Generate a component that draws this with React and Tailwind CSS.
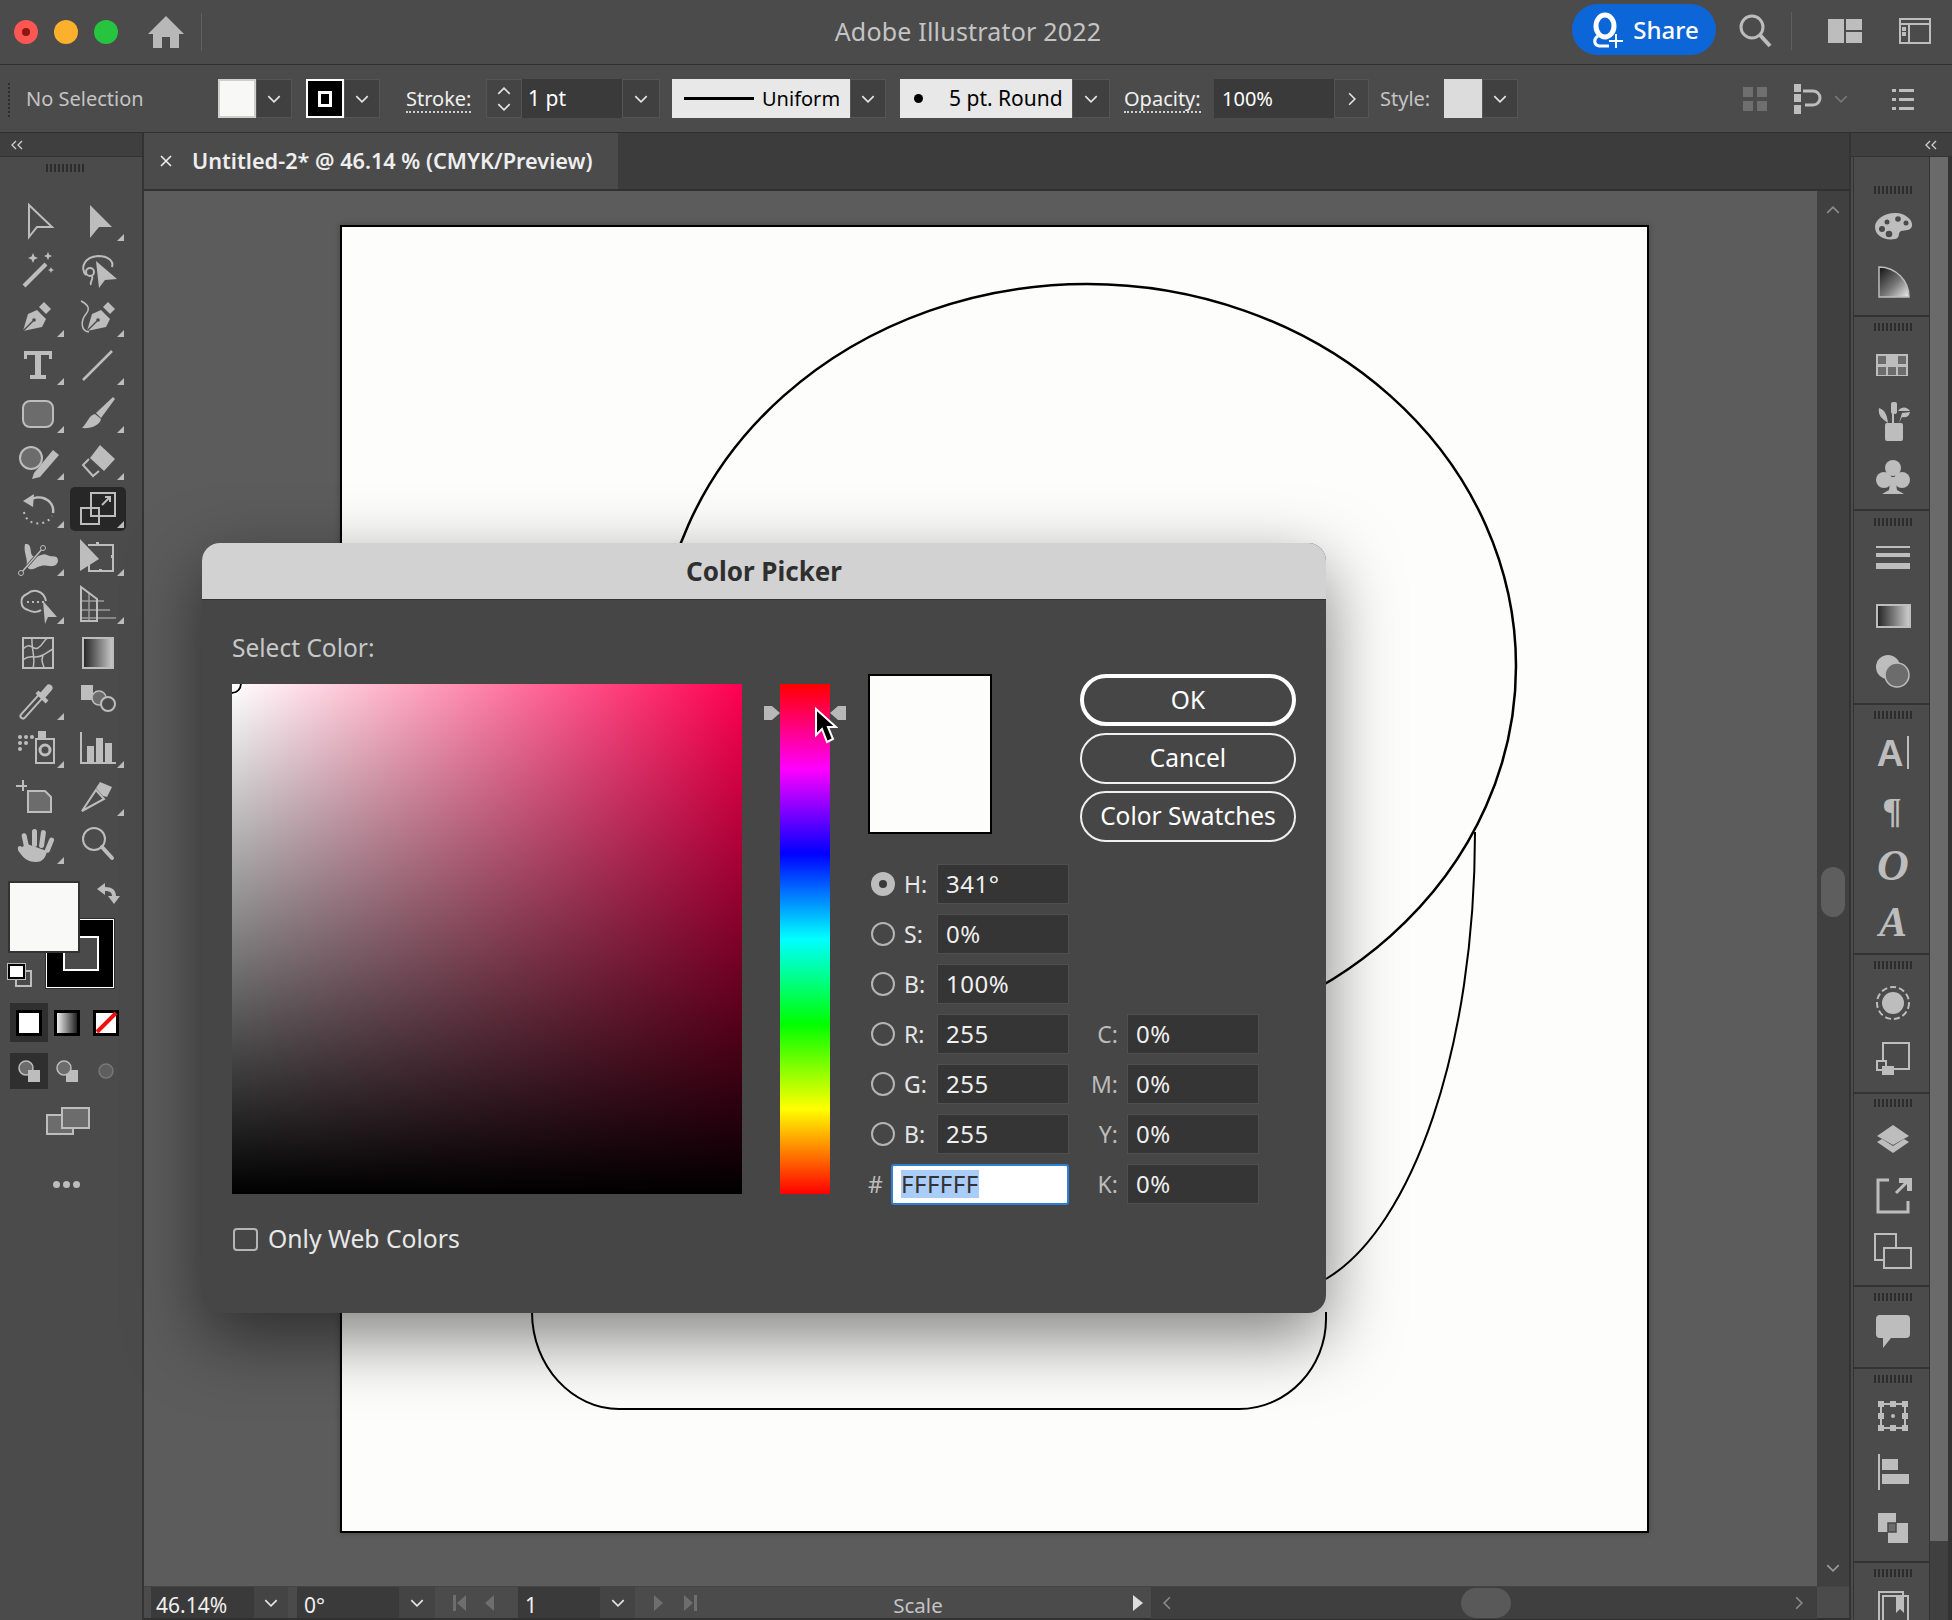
import React from "react";

const C = "#bdbdbd";
const Fly = () => <path d="M26 12V19H19Z" fill={C} />;
const T = ({ children, fly, sel }) => (
  <svg viewBox="-30 -24 60 48" className="w-[60px] h-[48px]" fill={C} stroke="none">
    {sel && <rect x="-28" y="-22" width="56" height="44" rx="5" fill="#272727" />}
    {children}
    {fly && <Fly />}
  </svg>
);
const R = ({ children }) => (
  <svg viewBox="-24 -24 48 48" className="w-[48px] h-[48px]" fill={C} stroke="none">{children}</svg>
);
const line = { stroke: C, fill: "none", strokeWidth: 2 };

const Star = ({ x, y, r }) => <path d={`M${x} ${y - r}L${x + r * 0.3} ${y - r * 0.3}L${x + r} ${y}L${x + r * 0.3} ${y + r * 0.3}L${x} ${y + r}L${x - r * 0.3} ${y + r * 0.3}L${x - r} ${y}L${x - r * 0.3} ${y - r * 0.3}Z`} />;
const Nib = ({ dx = 0 }) => (
  <g transform={`translate(${dx} 0)`}>
    <path d="M-15 13L-10 -4L-1 -8L8 1L4 9Z" />
    <path d="M1 -11L6 -16L13 -9L8 -4Z" />
    <path d="M-15 13L-5 3" stroke="#4a4a4a" strokeWidth="1.5" />
    <circle cx="-4" cy="2" r="1.8" fill="#4a4a4a" />
  </g>
);

const tools = [
  [<T><path d="M-9 -17L14 5L-1 5L-9 15Z" {...line} /></T>, <T fly><path d="M-8 -17L14 5L1 5L-8 16Z" /></T>],
  [<T><path d="M-14 16L8 -6" stroke={C} strokeWidth="4" /><Star x={-5} y={-12} r={5} /><Star x={10} y={-14} r={4} /><Star x={13} y={0} r={3} /></T>,
   <T><path d="M-12 5C-18 -2 -14 -13 0 -14C10 -14 16 -9 14 -3" {...line} /><circle cx="-8" cy="2" r="4" {...line} /><path d="M-6 6C-4 10 -9 12 -7 15" {...line} /><path d="M-2 -9L19 9L7 10L1 18Z" /></T>],
  [<T fly><Nib /></T>, <T fly><Nib dx={4} /><path d="M-17 -17C-11 -14 -7 -10 -12 -4C-17 2 -18 13 -9 14" {...line} strokeWidth="1.5" /></T>],
  [<T fly><path d="M-14 -15H14V-7H11V-11H3V9H8V13H-8V9H-3V-11H-11V-7H-14Z" /></T>, <T fly><path d="M-15 14L14 -15" stroke={C} strokeWidth="2.5" /></T>],
  [<T fly><rect x="-15" y="-13" width="30" height="26" rx="7" fill="#6c6c6c" stroke={C} strokeWidth="2" /></T>,
   <T fly><path d="M15 -17L17 -15L3 4L-2 -1Z" /><path d="M-3 0C-9 1 -10 8 -16 14C-7 15 2 11 3 5Z" /></T>],
  [<T fly><circle cx="-7" cy="-3" r="11" fill="#6c6c6c" stroke={C} strokeWidth="2" /><path d="M-4 12L15 -11L21 -6L2 16L-6 18Z" /></T>,
   <T fly><path d="M2 -16L17 -2L6 10L-8 -3Z" /><path d="M-9 -2L-15 4L-5 15L1 10" {...line} /></T>],
  [<T fly><path d="M-9 -8C0 -16 17 -10 15 4" {...line} strokeWidth="2.5" /><path d="M-15 -8L-4 -15L-5 -2Z" /><path d="M-14 3C-12 17 8 18 14 7" {...line} strokeDasharray="2 4" /></T>,
   <T fly sel><path d="M-7 -16H17V7H-7Z" {...line} /><path d="M-17 -1H1V15H-17Z" {...line} /><path d="M4 -4L12 -12M7 -12H12V-7" {...line} /></T>],
  [<T fly><path d="M-13 -13C-5 -14 -9 -4 -5 -1C-1 2 4 -5 9 -2C14 1 20 -3 20 4C18 13 8 7 3 9C-3 10 -7 16 -12 9C-9 3 -15 -4 -13 -13Z" /><path d="M-17 16L5 -9" stroke="#4a4a4a" strokeWidth="3" /><path d="M-17 16L5 -9" {...line} strokeWidth="1.5" /><circle cx="-17" cy="16" r="2.5" fill="#4a4a4a" stroke={C} /><circle cx="5" cy="-9" r="2.5" fill="#4a4a4a" stroke={C} /></T>,
   <T fly><path d="M-10 -12H15V14H-9V2" {...line} /><path d="M-18 -18L1 2L-18 14Z" /><rect x="-2" y="-15" width="3" height="3" /><rect x="13" y="-2" width="3" height="3" /><rect x="1" y="12" width="3" height="3" /></T>],
  [<T fly><path d="M8 -4C6 -14 -4 -17 -11 -11C-19 -8 -18 3 -10 5C-5 8 1 7 3 5" {...line} /><path d="M-11 -3H6" {...line} strokeDasharray="2 3" /><path d="M5 -4L19 12L10 12L7 19Z" /></T>,
   <T fly><path d="M-17 -18V16H-1L-1 -6Z" {...line} /><path d="M-17 -4H6M-17 5H12M-17 13H18M-9 -12V16" {...line} strokeWidth="1.5" opacity="0.7" /></T>],
  [<T><rect x="-15" y="-15" width="30" height="30" {...line} /><path d="M-15 -4C-7 -12 -6 -2 0 -5C6 -9 6 -14 10 -15M-15 7C-7 0 -3 7 5 2C10 -1 11 -2 15 -4M-6 -15C-7 -5 -2 5 -5 15M5 3C2 8 6 12 6 15" {...line} strokeWidth="1.5" /></T>,
   <T><defs><linearGradient id="tg" x1="0" x2="1" y1="0" y2="0"><stop offset="0" stopColor="#222" /><stop offset="1" stopColor="#ccc" /></linearGradient></defs><rect x="-15" y="-15" width="30" height="30" fill="url(#tg)" stroke={C} strokeWidth="2" /></T>],
  [<T fly><path d="M-15 15L3 -5" stroke={C} strokeWidth="7" strokeLinecap="round" /><path d="M-15 15L3 -5" stroke="#4a4a4a" strokeWidth="3" strokeLinecap="round" /><path d="M-1 -9L9 1" stroke={C} strokeWidth="4" /><path d="M5 -6L11 -13" stroke={C} strokeWidth="7" strokeLinecap="round" /></T>,
   <T><path d="M-17 -16H-5V-1H-17Z" /><circle cx="1" cy="-3" r="7" fill="#6c6c6c" stroke={C} strokeWidth="1.5" /><circle cx="10" cy="3" r="7" fill="#4a4a4a" stroke={C} strokeWidth="2" /></T>],
  [<T fly><circle cx="-18" cy="-12" r="2" /><circle cx="-12" cy="-12" r="2" /><circle cx="-6" cy="-12" r="2" /><circle cx="-18" cy="-6" r="2" /><circle cx="-12" cy="-6" r="2" /><circle cx="-18" cy="0" r="2" /><rect x="0" y="-18" width="8" height="7" /><rect x="-2" y="-10" width="18" height="24" {...line} /><circle cx="7" cy="1" r="5" {...line} strokeWidth="3" /></T>,
   <T fly><path d="M-17 -17V14H18" {...line} /><rect x="-11" y="-3" width="7" height="16" /><rect x="-2" y="-11" width="7" height="24" /><rect x="7" y="-6" width="7" height="19" /></T>],
  [<T><path d="M-22 -11H-11M-15 -17V-6" {...line} /><path d="M-10 -6H7L13 0V15H-10Z" fill="#6c6c6c" stroke={C} strokeWidth="2" /></T>,
   <T fly><path d="M-16 14L-2 -7L6 2Z" {...line} /><path d="M-2 -9L2 -15L14 -10L9 0L5 -1Z" /></T>],
  [<T fly><rect x="-6" y="-16" width="5" height="18" rx="2.5" /><rect x="-15" y="-12" width="5" height="18" rx="2.5" transform="rotate(-12 -12 -3)" /><rect x="2" y="-15" width="5" height="18" rx="2.5" transform="rotate(8 4 -6)" /><rect x="9" y="-8" width="5" height="16" rx="2.5" transform="rotate(22 11 0)" /><path d="M-16 2C-20 -1 -22 4 -18 8C-14 14 -9 17 -2 17C5 17 8 12 9 6L-11 -1Z" /></T>,
   <T><circle cx="-4" cy="-6" r="11" {...line} /><path d="M4 2L14 13" stroke={C} strokeWidth="4" strokeLinecap="round" /></T>],
];

const Chev = ({ d = "down", c = "#e6e6e6", s = 16 }) => (
  <svg viewBox="0 0 14 14" width={s} height={s} fill="none" stroke={c} strokeWidth="1.4">
    <path d={d === "down" ? "M2 4.5L7 9.5L12 4.5" : d === "up" ? "M2 9.5L7 4.5L12 9.5" : d === "right" ? "M4.5 2L9.5 7L4.5 12" : "M9.5 2L4.5 7L9.5 12"} />
  </svg>
);
const Drop = ({ w = "w-[36px]" }) => (
  <div className={`${w} h-[39px] bg-[#404040] flex items-center justify-center border border-[#555555]`}><Chev /></div>
);
const Grip = () => <div className="h-[8px] w-[38px] bg-[repeating-linear-gradient(90deg,#2c2c2c_0_2px,transparent_2px_4px)]" />;
const Collapse = () => (
  <svg width="14" height="10" viewBox="0 0 14 10" fill="none" stroke="#cfcfcf" strokeWidth="1.3"><path d="M6 1L2 5L6 9M12 1L8 5L12 9" /></svg>
);

const Group = ({ h, top = 6, gap = 6, cell = "h-[56px]", items, last }) => (
  <div className={`${h} flex flex-col items-center shrink-0 pl-[3px] ${last ? "" : "border-b-2 border-[#333333]"}`}>
    <div style={{ height: top }} className="shrink-0" />
    <Grip />
    <div style={{ height: gap }} className="shrink-0" />
    {items.map((it, i) => <div key={i} className={`${cell} flex items-center justify-center shrink-0`}><R>{it}</R></div>)}
  </div>
);

const serif = { fontFamily: "'Liberation Serif', serif" };
const sans = { fontFamily: "'Liberation Sans', sans-serif" };

const rightGroups = [
  { h: "h-[160px]", top: 29, gap: 4, items: [
    <g><path d="M-18 1C-18 -8 -6 -14 4 -13C13 -12 20 -6 19 0C18 5 12 4 8 5C4 7 8 12 2 13C-8 15 -18 10 -18 1Z" /><circle cx="-11" cy="3" r="3" fill="#4a4a4a" /><circle cx="-4" cy="8" r="3.3" fill="#4a4a4a" /><circle cx="-6" cy="-4" r="2.5" fill="#4a4a4a" /><circle cx="5" cy="-7" r="2.8" fill="#4a4a4a" /><circle cx="13" cy="-3" r="2.5" fill="#4a4a4a" /></g>,
    <g><defs><linearGradient id="sp" x1="0" y1="0" x2="1" y2="1"><stop offset="0" stopColor="#111" /><stop offset="0.55" stopColor="#777" /><stop offset="1" stopColor="#eee" /></linearGradient></defs><path d="M-14 -15A30 30 0 0 1 16 15H-14Z" fill="url(#sp)" stroke={C} strokeWidth="1.5" /></g>,
  ] },
  { h: "h-[194px]", items: [
    <g><rect x="-17" y="-11" width="32" height="22" /><rect x="-15" y="-9" width="8" height="8" fill="#6c6c6c" /><rect x="5" y="-9" width="8" height="8" fill="#6c6c6c" /><rect x="-15" y="2" width="8" height="8" fill="#6c6c6c" /><rect x="-5" y="2" width="8" height="8" fill="#6c6c6c" /><rect x="5" y="2" width="8" height="8" fill="#6c6c6c" /></g>,
    <g><rect x="-8" y="2" width="18" height="18" rx="2" /><rect x="-2" y="-19" width="6" height="12" rx="2" /><path d="M0 -8V2" stroke={C} strokeWidth="2" /><path d="M-14 -13C-8 -11 -6 -6 -5 2L-9 -1C-13 -4 -15 -8 -14 -13Z" /><path d="M6 2L9 -8L17 -9C16 -4 12 -3 9 -4" /><path d="M5 -10C9 -15 14 -14 17 -10Z" /></g>,
    <g><circle cx="0" cy="-9" r="8" /><circle cx="-9" cy="3" r="8" /><circle cx="9" cy="3" r="8" /><path d="M-2 0H2L4 13L11 17H-11L-4 13Z" /></g>,
  ] },
  { h: "h-[194px]", top: 7, items: [
    <g><rect x="-17" y="-14" width="34" height="2" /><rect x="-17" y="-7" width="34" height="4" /><rect x="-17" y="3" width="34" height="6" /></g>,
    <g><defs><linearGradient id="rg" x1="0" x2="1" y1="0" y2="0"><stop offset="0" stopColor="#222" /><stop offset="1" stopColor="#d0d0d0" /></linearGradient></defs><rect x="-16" y="-11" width="33" height="22" fill="url(#rg)" stroke={C} strokeWidth="2" /></g>,
    <g><circle cx="-5" cy="-5" r="12" /><circle cx="4" cy="3" r="12" fill="#6c6c6c" stroke={C} strokeWidth="1.5" /></g>,
  ] },
  { h: "h-[250px]", items: [
    <g><text x="-3" y="13" textAnchor="middle" fontSize="37" fontWeight="700" fill={C} style={sans}>A</text><rect x="14" y="-17" width="2" height="33" /></g>,
    <text x="-1" y="14" textAnchor="middle" fontSize="36" fontWeight="700" fill={C} style={serif}>¶</text>,
    <text x="0" y="15" textAnchor="middle" fontSize="44" fontWeight="700" fontStyle="italic" fill={C} style={serif}>O</text>,
    <text x="0" y="15" textAnchor="middle" fontSize="42" fontWeight="700" fontStyle="italic" fill={C} style={serif}>A</text>,
  ] },
  { h: "h-[139px]", items: [
    <g><circle cx="0" cy="0" r="11" /><circle cx="0" cy="0" r="16" fill="none" stroke={C} strokeWidth="2" strokeDasharray="6 3" /></g>,
    <g><rect x="-10" y="-16" width="26" height="26" fill="#4a4a4a" stroke={C} strokeWidth="2" /><rect x="-16" y="2" width="9" height="9" fill="#4a4a4a" stroke={C} strokeWidth="2" /><rect x="-11" y="7" width="12" height="9" /></g>,
  ] },
  { h: "h-[193px]", top: 5, gap: 4, items: [
    <g><path d="M0 -14L16 -3L0 6L-16 -3Z" /><path d="M-16 3L-11 0L0 7L11 0L16 3L0 14Z" /></g>,
    <g><path d="M-4 -15H-15V17H15V6" {...line} strokeWidth="3" /><path d="M6 -17H19V-4H14V-12H6Z" /><path d="M15 -14L3 -2" {...line} strokeWidth="3" /></g>,
    <g><rect x="-18" y="-17" width="21" height="26" {...line} /><rect x="-9" y="-3" width="27" height="20" fill="#4a4a4a" stroke={C} strokeWidth="2" /></g>,
  ] },
  { h: "h-[82px]", gap: 3, cell: "h-[56px]", items: [
    <path d="M-14 -17H13A4 4 0 0 1 17 -13V2A4 4 0 0 1 13 6H-2L-10 16V6H-14A4 4 0 0 1 -17 2V-13A4 4 0 0 1 -14 -17Z" />,
  ] },
  { h: "h-[194px]", gap: 5, items: [
    <g><rect x="-12" y="-12" width="24" height="24" {...line} fill="none" /><rect x="-15" y="-15" width="6" height="6" /><rect x="-3" y="-15" width="6" height="6" /><rect x="9" y="-15" width="6" height="6" /><rect x="-15" y="-3" width="6" height="6" /><rect x="9" y="-3" width="6" height="6" /><rect x="-15" y="9" width="6" height="6" /><rect x="-3" y="9" width="6" height="6" /><rect x="9" y="9" width="6" height="6" /><circle r="2" /></g>,
    <g><rect x="-15" y="-18" width="2" height="36" /><rect x="-11" y="-13" width="16" height="11" /><rect x="-11" y="2" width="27" height="10" /></g>,
    <g><rect x="-15" y="-15" width="18" height="19" /><rect x="-5" y="-5" width="20" height="20" /><rect x="-5" y="-5" width="8" height="9" fill="#6c6c6c" stroke="#4a4a4a" strokeWidth="1.5" /></g>,
  ] },
  { h: "flex-1", gap: 4, last: true, items: [
    <g><path d="M-14 -17H10V12H-14Z" {...line} /><path d="M-10 -13H15V18H-10Z" fill="#4a4a4a" stroke={C} strokeWidth="2" /><path d="M3 -13H11V4L7 0L3 4Z" /></g>,
  ] },
];

const Radio = ({ on }) => on ? (
  <div className="w-[24px] h-[24px] rounded-full bg-[#bdbdbd] flex items-center justify-center"><div className="w-[8px] h-[8px] rounded-full bg-[#3a3a3a]" /></div>
) : <div className="w-[24px] h-[24px] rounded-full border-2 border-[#b5b5b5]" />;

const Field = ({ v }) => (
  <div className="w-[132px] h-[40px] bg-[#353535] border border-[#4f4f4f] pl-[8px] flex items-center text-[#f0f0f0] text-[24px] tracking-[0.5px]">{v}</div>
);

const rows = [
  ["H:", "341°", true],
  ["S:", "0%"],
  ["B:", "100%"],
  ["R:", "255", false, "C:", "0%"],
  ["G:", "255", false, "M:", "0%"],
  ["B:", "255", false, "Y:", "0%"],
];

const Btn = ({ children, strong }) => (
  <div className={`w-[216px] rounded-full flex items-center justify-center text-white text-[24.5px] ${strong ? "h-[52px] border-[4px] border-white" : "h-[51px] border-2 border-[#f0f0f0]"}`}>{children}</div>
);

export default function App() {
  return (
    <div className="relative w-[1952px] h-[1620px] overflow-hidden flex flex-col bg-[#4b4b4b] text-[#d8d8d8] font-['Noto_Sans','Open_Sans',sans-serif]">
      {/* Title bar */}
      <header className="h-[65px] shrink-0 border-b border-[#2f2f2f] flex items-center pl-[14px] relative">
        <div className="flex gap-[16px]">
          <div className="w-[24px] h-[24px] rounded-full bg-[#fc5753] flex items-center justify-center"><div className="w-[8px] h-[8px] rounded-full bg-[#8e1510]" /></div>
          <div className="w-[24px] h-[24px] rounded-full bg-[#fdb02c]" />
          <div className="w-[24px] h-[24px] rounded-full bg-[#27c440]" />
        </div>
        <svg viewBox="0 0 36 32" className="ml-[30px] w-[36px] h-[32px]" fill="#b8b8b8"><path d="M18 0L36 18H31V32H22V21H14V32H5V18H0Z" /></svg>
        <div className="ml-[17px] w-px h-[38px] bg-[#5f5f5f]" />
        <div className="flex-1 text-center text-[25px] text-[#c4c4c4] tracking-[0.2px] pr-[458px] pl-[240px] whitespace-nowrap">Adobe Illustrator 2022</div>
        <div className="w-[144px] h-[51px] rounded-full bg-[#0d66d8] flex items-center justify-center gap-[8px] text-white text-[24px] font-medium shrink-0 absolute left-[1572px] top-[4px]">
          <svg viewBox="0 0 36 36" width="36" height="36" fill="none" stroke="#fff"><ellipse cx="16" cy="14" rx="9" ry="11" strokeWidth="5" /><path d="M9 24C4 27 5 33 10 34H20" strokeWidth="3" /><path d="M27 22V36M20 29H34" strokeWidth="2" /></svg>
          Share
        </div>
        <svg viewBox="0 0 34 34" className="absolute left-[1738px] top-[14px] w-[34px] h-[34px]" fill="none" stroke="#bcbcbc" strokeWidth="3"><circle cx="14" cy="13" r="11" /><path d="M22 21L32 32" strokeWidth="4" /></svg>
        <div className="absolute left-[1791px] top-[12px] w-px h-[38px] bg-[#5f5f5f]" />
        <svg viewBox="0 0 34 24" className="absolute left-[1828px] top-[19px] w-[34px] h-[24px]" fill="#bdbdbd"><rect width="16" height="24" /><rect x="18" width="16" height="11" /><rect x="18" y="13" width="16" height="11" /></svg>
        <svg viewBox="0 0 32 26" className="absolute left-[1899px] top-[18px] w-[32px] h-[26px]" fill="none" stroke="#bdbdbd" strokeWidth="2"><rect x="1" y="1" width="30" height="24" /><path d="M1 6H31M10 6V25" /><rect x="4" y="10" width="2" height="2" fill="#bdbdbd" /><rect x="4" y="15" width="2" height="2" fill="#bdbdbd" /></svg>
      </header>

      {/* Control bar */}
      <div className="h-[68px] shrink-0 border-b border-[#2f2f2f] flex items-center text-[20px] whitespace-nowrap">
        <div className="ml-[8px] w-[2px] h-[36px] bg-[repeating-linear-gradient(0deg,#2c2c2c_0_2px,transparent_2px_4px)]" />
        <div className="ml-[16px] w-[192px] text-[#c4c4c4] text-[20px]">No Selection</div>
        <div className="w-[38px] h-[39px] bg-[#f8f8f6] border-2 border-[#cfcfcf]" />
        <Drop />
        <div className="ml-[14px] w-[38px] h-[39px] bg-black border-2 border-white flex items-center justify-center">
          <div className="w-[14px] h-[16px] bg-black border-[3px] border-white" />
        </div>
        <Drop />
        <div className="ml-[26px] w-[80px] text-[#f0f0f0]"><span className="border-b-2 border-dotted border-[#d0d0d0] leading-[24px] inline-block">Stroke:</span></div>
        <div className="w-[36px] h-[39px] bg-[#444444] border border-[#555555] flex flex-col items-center justify-center"><Chev d="up" s={16} /><Chev d="down" s={16} /></div>
        <div className="w-[100px] h-[39px] bg-[#3a3a3a] pl-[6px] flex items-center text-white text-[21px]">1 pt</div>
        <Drop w="w-[38px]" />
        <div className="ml-[12px] w-[178px] h-[39px] bg-[#e8e8e8] flex items-center pl-[12px] text-black">
          <div className="w-[70px] h-[3px] bg-black mr-[8px]" />Uniform
        </div>
        <Drop />
        <div className="ml-[14px] w-[172px] h-[39px] bg-[#e8e8e8] flex items-center pl-[14px] text-black text-[21px]">
          <div className="w-[9px] h-[9px] rounded-full bg-black mr-[26px]" />5 pt. Round
        </div>
        <Drop w="w-[38px]" />
        <div className="ml-[14px] w-[90px] text-[#f0f0f0]"><span className="border-b-2 border-dotted border-[#d0d0d0] leading-[24px] inline-block">Opacity:</span></div>
        <div className="w-[120px] h-[39px] bg-[#3a3a3a] pl-[8px] flex items-center text-white">100%</div>
        <div className="w-[35px] h-[39px] bg-[#444444] border border-[#555555] flex items-center justify-center"><Chev d="right" /></div>
        <div className="ml-[11px] w-[64px] text-[#c4c4c4]">Style:</div>
        <div className="w-[38px] h-[39px] bg-[#dcdcdc]" />
        <Drop />
        <svg viewBox="0 0 28 28" className="ml-[223px] w-[28px] h-[28px]" fill="#6f6f6f"><rect x="2" y="2" width="10" height="10" /><rect x="16" y="2" width="10" height="10" /><rect x="2" y="16" width="10" height="10" /><rect x="16" y="16" width="10" height="10" /></svg>
        <svg viewBox="0 0 30 30" className="ml-[24px] w-[30px] h-[30px]" fill="#bdbdbd"><rect x="1" y="0" width="7" height="8" /><rect x="1" y="10" width="7" height="8" /><rect x="1" y="21" width="7" height="9" /><path d="M10 7H20A7 7 0 0 1 20 21H12" fill="none" stroke="#bdbdbd" strokeWidth="3" /></svg>
        <div className="ml-[10px]"><Chev c="#777777" /></div>
        <svg viewBox="0 0 22 24" className="ml-[43px] w-[22px] h-[24px]" fill="#bdbdbd"><rect y="2" width="4" height="3" /><rect x="7" y="2" width="15" height="3" /><rect y="11" width="4" height="3" /><rect x="7" y="11" width="15" height="3" /><rect y="20" width="4" height="3" /><rect x="7" y="20" width="15" height="3" /></svg>
      </div>

      {/* Main */}
      <div className="flex-1 flex min-h-0">
        {/* Tools */}
        <aside className="w-[144px] shrink-0 border-r-2 border-[#333333] flex flex-col">
          <div className="h-[24px] shrink-0 bg-[#3f3f3f] border-b border-[#333333] flex items-center pl-[10px]"><Collapse /></div>
          <div className="h-[41px] shrink-0 flex items-start justify-center pr-[12px] pt-[7px]"><Grip /></div>
          <div className="grid grid-cols-[60px_60px] auto-rows-[47.9px] pl-[8px]">
            {tools.flat().map((t, i) => <div key={i} className="flex items-center justify-center">{t}</div>)}
          </div>

          {/* Fill and stroke */}
          <div className="relative h-[111px] w-[130px] mt-[13px] shrink-0">
            <div className="absolute left-[45px] top-[37px] w-[70px] h-[71px] bg-[#2c2c2c] p-[1px]">
              <div className="w-full h-full bg-black border border-white">
                <div className="ml-[16px] mt-[16px] w-[36px] h-[35px] bg-[#4a4a4a] border-2 border-white" />
              </div>
            </div>
            <div className="absolute left-[8px] top-0 w-[72px] h-[72px] bg-[#f9f9f7] border-2 border-[#333333]" />
            <svg viewBox="0 0 24 22" className="absolute left-[97px] top-[2px] w-[24px] h-[22px]" fill="#bdbdbd"><path d="M8 0V4C15 4 19 7 19 13H23L17 21L11 13H15C15 9 12 8 8 8V12L0 6Z" /></svg>
            <div className="absolute left-[15px] top-[89px] w-[17px] h-[17px] bg-[#4b4b4b] border-2 border-[#bdbdbd]" />
            <div className="absolute left-[8px] top-[83px] w-[17px] h-[15px] bg-white border-2 border-black outline outline-[#bdbdbd]" />
          </div>

          {/* Colour modes */}
          <div className="ml-[10px] mt-[11px] w-[115px] h-[39px] grid grid-cols-3">
            <div className="bg-[#2f2f2f] flex items-center justify-center"><div className="w-[26px] h-[26px] bg-white border-[3px] border-black" /></div>
            <div className="flex items-center justify-center"><div className="w-[26px] h-[26px] bg-[linear-gradient(90deg,#eeeeee,#222222)] border-[3px] border-black" /></div>
            <div className="flex items-center justify-center"><svg viewBox="0 0 26 26" className="w-[26px] h-[26px]"><rect x="1.5" y="1.5" width="23" height="23" fill="#fff" stroke="#000" strokeWidth="3" /><path d="M4 22L23 3" stroke="#ee1111" strokeWidth="4" /></svg></div>
          </div>
          <div className="ml-[10px] mt-[11px] w-[115px] h-[36px] grid grid-cols-3">
            <div className="bg-[#2f2f2f] flex items-center justify-center"><svg viewBox="0 0 22 22" width="22" height="22"><circle cx="8" cy="8" r="7" fill="#6c6c6c" stroke="#bdbdbd" strokeWidth="1.5" /><rect x="10" y="10" width="12" height="12" fill="#bdbdbd" /></svg></div>
            <div className="flex items-center justify-center"><svg viewBox="0 0 22 22" width="22" height="22"><rect x="10" y="10" width="12" height="12" fill="#bdbdbd" /><circle cx="8" cy="8" r="7" fill="#6c6c6c" stroke="#bdbdbd" strokeWidth="1.5" /></svg></div>
            <div className="flex items-center justify-center"><svg viewBox="0 0 18 18" width="18" height="18"><circle cx="9" cy="9" r="7" fill="#5e5e5e" stroke="#777777" strokeWidth="1.5" /></svg></div>
          </div>
          <svg viewBox="0 0 44 28" className="ml-[46px] mt-[16px] w-[44px] h-[32px]"><rect x="1" y="8" width="26" height="19" fill="#6c6c6c" stroke="#bdbdbd" strokeWidth="2" /><rect x="16" y="1" width="27" height="20" fill="#6c6c6c" stroke="#bdbdbd" strokeWidth="2" /></svg>
          <div className="ml-[53px] mt-[44px] flex gap-[3px]">
            <div className="w-[7px] h-[7px] rounded-full bg-[#bdbdbd]" />
            <div className="w-[7px] h-[7px] rounded-full bg-[#bdbdbd]" />
            <div className="w-[7px] h-[7px] rounded-full bg-[#bdbdbd]" />
          </div>
        </aside>

        {/* Centre */}
        <div className="flex-1 min-w-0 flex flex-col">
          <div className="h-[58px] shrink-0 bg-[#3c3c3c] border-b-2 border-[#303030] flex">
            <div className="w-[474px] bg-[#4b4b4b] flex items-center pl-[16px] text-[#eeeeee] text-[21.7px] font-semibold whitespace-nowrap">
              <svg viewBox="0 0 12 12" className="w-[12px] h-[12px] mr-[20px]" fill="none" stroke="#eeeeee" strokeWidth="1.6"><path d="M1 1L11 11M11 1L1 11" /></svg>
              Untitled-2* @ 46.14 % (CMYK/Preview)
            </div>
          </div>
          <div className="flex-1 min-h-0 flex">
            <div className="flex-1 bg-[#5c5c5c] pl-[196px] pt-[34px] overflow-hidden">
              <div className="w-[1309px] h-[1308px] bg-[#fdfdfb] border-2 border-black shadow-[0_0_6px_rgba(0,0,0,0.25)]">
                <svg viewBox="-1 0 1305 1304" className="w-[1305px] h-[1304px]" fill="none" stroke="#000">
                  <ellipse cx="744" cy="439" rx="429" ry="382" strokeWidth="2.5" />
                  <path d="M1132 605C1132 820 1070 1000 983 1052" strokeWidth="2" />
                  <path d="M189 1085C189 1140 230 1182 276 1182H896C945 1182 983 1140 983 1092V1085" strokeWidth="2" />
                </svg>
              </div>
            </div>
            <div className="w-[32px] shrink-0 bg-[#404040] flex flex-col items-center pt-[11px] pb-[10px]">
              <Chev d="up" c="#8c8c8c" />
              <div className="mt-[649px] w-[24px] h-[50px] rounded-full bg-[#5e5e5e]" />
              <div className="mt-auto"><Chev d="down" c="#9a9a9a" /></div>
            </div>
          </div>
          <div className="h-[34px] shrink-0 border-t border-[#444444] border-b-2 border-b-[#303030] flex items-center text-[21px] text-[#f0f0f0] whitespace-nowrap">
            <div className="ml-[7px] w-[103px] h-[31px] bg-[#3a3a3a] pl-[5px] pt-[6px] flex items-center">46.14%</div>
            <div className="w-[34px] h-[31px] bg-[#444444] flex items-center justify-center"><Chev /></div>
            <div className="ml-[9px] w-[102px] h-[31px] bg-[#3a3a3a] pl-[7px] pt-[6px] flex items-center">0°</div>
            <div className="w-[36px] h-[31px] bg-[#444444] flex items-center justify-center"><Chev /></div>
            <svg viewBox="0 0 50 18" className="ml-[18px] w-[50px] h-[18px]" fill="#6e6e6e"><rect x="0" y="1" width="3" height="16" /><path d="M4 9L13 1V17Z" /><path d="M32 9L41 1V17Z" /></svg>
            <div className="ml-[15px] w-[82px] h-[31px] bg-[#3a3a3a] pl-[7px] pt-[6px] flex items-center">1</div>
            <div className="w-[35px] h-[31px] bg-[#444444] flex items-center justify-center"><Chev /></div>
            <svg viewBox="0 0 50 18" className="ml-[18px] w-[50px] h-[18px]" fill="#6e6e6e"><path d="M1 1L10 9L1 17Z" /><path d="M31 1L40 9L31 17Z" /><rect x="41" y="1" width="3" height="16" /></svg>
            <div className="w-[425px] text-center text-[#c4c4c4] pl-[5px] pt-[6px] text-[20.5px]">Scale</div>
            <svg viewBox="0 0 10 16" className="w-[10px] h-[16px] ml-[5px]" fill="#dedede"><path d="M0 0L10 8L0 16Z" /></svg>
            <div className="ml-[8px] h-[32px] flex-1 bg-[#3f3f3f] flex items-center pl-[8px] pr-[10px] justify-between">
              <Chev d="left" c="#8c8c8c" s={16} />
              <div className="w-[50px] h-[30px] rounded-full bg-[#595959] ml-[286px]" />
              <div className="flex-1" />
              <Chev d="right" c="#8c8c8c" s={16} />
            </div>
            <div className="w-[32px] shrink-0" />
          </div>
        </div>

        {/* Right dock */}
        <aside className="w-[103px] shrink-0 border-l-2 border-[#333333] flex flex-col">
          <div className="h-[24px] shrink-0 bg-[#3f3f3f] border-b border-[#333333] flex items-center justify-end pr-[14px]"><Collapse /></div>
          <div className="flex-1 min-h-0 flex">
            <div className="ml-[2px] w-[77px] border-x border-[#333333] flex flex-col">
              {rightGroups.map((g, i) => <Group key={i} {...g} />)}
            </div>
            <div className="w-[18px] flex flex-col">
              <div className="h-[1384px] bg-[#6a6a6a]" />
              <div className="flex-1 bg-[#404040]" />
            </div>
            <div className="w-[4px] bg-[#333333]" />
          </div>
        </aside>
      </div>

      {/* Colour picker dialog */}
      <div className="absolute left-[202px] top-[543px] w-[1124px] h-[770px] rounded-[18px] overflow-hidden bg-[#464646] shadow-[0_24px_70px_rgba(0,0,0,0.5)] flex flex-col">
        <div className="h-[57px] shrink-0 bg-[#d2d2d2] flex items-center justify-center text-[#2f2f2f] text-[26px] font-bold border-b border-[#333333]">Color Picker</div>
        <div className="pl-[30px] flex-1 flex flex-col">
          <div className="h-[28px] mt-[34px] text-[24.5px] text-[#c8c8c8] leading-[28px]">Select Color:</div>
          <div className="flex mt-[12px]">
            <div className="w-[510px] shrink-0 mt-[10px]">
              <div className="h-[510px] overflow-hidden bg-[linear-gradient(to_top,#000,transparent),linear-gradient(to_right,#fff,#ff0051)]">
                <div className="w-[20px] h-[20px] rounded-full border-2 border-black ml-[-10px] mt-[-10px] outline-2 outline-white" />
              </div>
              <div className="mt-[31px] h-[28px] flex items-center text-[24.7px] text-[#e8e8e8] pl-[1px]">
                <div className="w-[25px] h-[23px] rounded-[4px] border-2 border-[#b5b5b5] mr-[10px]" />Only Web Colors
              </div>
            </div>
            <div className="ml-[22px] w-[82px] h-[510px] mt-[10px] flex items-start shrink-0 relative">
              <svg viewBox="0 0 16 14" className="w-[16px] h-[14px] mt-[22px]" fill="#b8b8b8"><path d="M0 0H8L16 7L8 14H0Z" /></svg>
              <div className="w-[50px] h-[510px] bg-[linear-gradient(to_bottom,#f00,#f0f_16.66%,#00f_33.33%,#0ff_50%,#0f0_66.66%,#ff0_83.33%,#f00)]" />
              <svg viewBox="0 0 16 14" className="w-[16px] h-[14px] mt-[22px]" fill="#b8b8b8"><path d="M16 0H8L0 7L8 14H16Z" /></svg>
              <svg viewBox="0 0 24 38" className="absolute left-[50px] top-[23px] w-[24px] h-[38px]" fill="#000" stroke="#fff" strokeWidth="2"><path d="M2 2V28L8 22L13 35L19 32L14 20H22Z" /></svg>
            </div>
            <div className="ml-[22px] flex-1 flex flex-col">
              <div className="flex h-[167px] items-start">
                <div className="w-[124px] h-[160px] bg-[#fdfdfb] border-2 border-black" />
                <div className="ml-[88px] flex flex-col gap-[7px]">
                  <Btn strong>OK</Btn>
                  <Btn>Cancel</Btn>
                  <Btn>Color Swatches</Btn>
                </div>
              </div>
              <div className="mt-[23px] flex flex-col gap-[10px]">
                {rows.map(([l, v, on, l2, v2], i) => (
                  <div key={i} className="flex items-center h-[40px] text-[23px]">
                    <div className="w-[69px] flex items-center pl-[3px] shrink-0">
                      <Radio on={on} />
                      <span className="ml-[9px] text-[#e6e6e6]">{l}</span>
                    </div>
                    <Field v={v} />
                    {l2 && <div className="w-[58px] text-right pr-[9px] text-[#bcbcbc]">{l2}</div>}
                    {l2 && <Field v={v2} />}
                  </div>
                ))}
                <div className="flex items-center h-[40px] text-[23px]">
                  <div className="w-[23px] text-[#bcbcbc]">#</div>
                  <div className="w-[178px] h-[41px] rounded-[3px] bg-white border-2 border-[#2f7fd8] pl-[8px] flex items-center text-[#333333] text-[24px] tracking-[0.5px]">
                    <span className="bg-[#a9cdf8] leading-[28px]">FFFFFF</span>
                  </div>
                  <div className="w-[58px] text-right pr-[9px] text-[#bcbcbc]">K:</div>
                  <Field v="0%" />
                </div>
              </div>
            </div>
          </div>
        </div>
      </div>
    </div>
  );
}
